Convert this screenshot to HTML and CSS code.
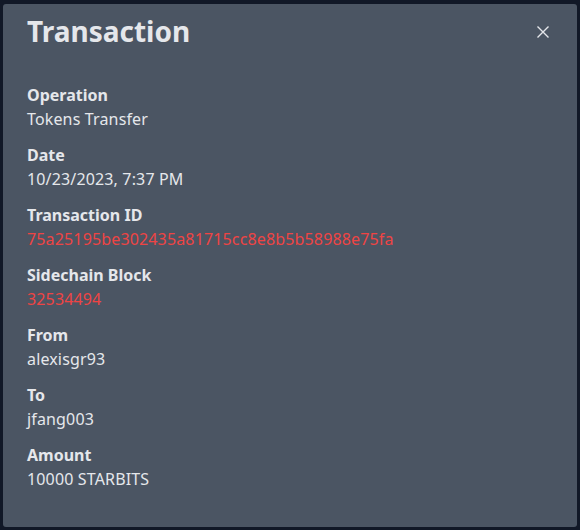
FILE: index.html
```html
<!DOCTYPE html>
<html>

<head>
	<meta charset='utf-8'>
	<title>Transaction</title>
	<link rel="stylesheet" href="styles.css">
</head>

<body>
	<div class="modal">
		<div class="modal_header">
			<h2 class="modal_title">Transaction</h2>
			<button class="modal_close" aria-label="Close">
				<svg width="14" height="14" viewBox="0 0 14 14"><path d="M1.5 1.5 L12.5 12.5 M12.5 1.5 L1.5 12.5" stroke="currentColor" stroke-width="1.4" fill="none"/></svg>
			</button>
		</div>
		<dl class="details">
			<div class="row"><dt>Operation</dt><dd>Tokens Transfer</dd></div>
			<div class="row"><dt>Date</dt><dd>10/23/2023, 7:37 PM</dd></div>
			<div class="row"><dt>Transaction ID</dt><dd class="link">75a25195be302435a81715cc8e8b5b58988e75fa</dd></div>
			<div class="row"><dt>Sidechain Block</dt><dd class="link">32534494</dd></div>
			<div class="row"><dt>From</dt><dd>alexisgr93</dd></div>
			<div class="row"><dt>To</dt><dd>jfang003</dd></div>
			<div class="row"><dt>Amount</dt><dd>10000 STARBITS</dd></div>
		</dl>
	</div>
</body>

</html>
```

FILE: styles.css
```css
html, body {
	margin: 0;
	height: 100%;
}
body {
	background: #111827;
	font-family: "Noto Sans", sans-serif;
	color: #e5e7eb;
	padding: 4px 3px 3px;
	box-sizing: border-box;
}
.modal {
	background: #4b5563;
	border-radius: 3px;
	height: 523px;
	padding: 10px 24px 0;
	box-sizing: border-box;
}
.modal_header {
	display: flex;
	justify-content: space-between;
	align-items: center;
}
.modal_title {
	margin: 0;
	font-size: 28px;
	line-height: 34px;
	font-weight: 700;
	color: #e5e7eb;
}
.modal_close {
	background: none;
	border: 0;
	padding: 0;
	margin-right: 3px;
	margin-top: 2px;
	color: #e5e7eb;
	display: flex;
}
.details {
	margin: 35px 0 0;
	display: flex;
	flex-direction: column;
	gap: 12px;
}
dt {
	font-size: 16px;
	line-height: 24px;
	font-weight: 700;
}
dd {
	margin: 0;
	font-size: 16px;
	line-height: 24px;
	letter-spacing: 0.15px;
	color: #e5e7eb;
}
.link {
	color: #ef4444;
}
```
